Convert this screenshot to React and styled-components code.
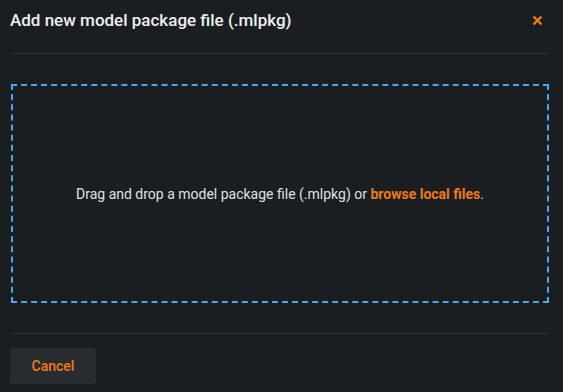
import React from "react";
import styled, { createGlobalStyle } from "styled-components";

const GlobalStyle = createGlobalStyle`
  html, body {
    margin: 0;
    padding: 0;
    background: #1a1e21;
  }
  body {
    font-family: Roboto, "Liberation Sans", sans-serif;
  }
`;

const Dialog = styled.div`
  width: 563px;
  height: 392px;
  box-sizing: border-box;
  background: #1a1e21;
  padding: 0 14px 0 10px;
  display: flex;
  flex-direction: column;
`;

const Header = styled.div`
  height: 40px;
  display: flex;
  align-items: center;
  justify-content: space-between;
  margin-bottom: 13px;
`;

const Title = styled.h2`
  margin: 0;
  font-size: 17px;
  font-weight: 500;
  color: #eef0f2;
`;

const CloseButton = styled.button`
  border: 0;
  background: none;
  padding: 0;
  width: 14px;
  height: 14px;
  margin-right: 5px;
  display: flex;
  align-items: center;
  justify-content: center;
  cursor: pointer;
`;

const Divider = styled.div`
  height: 1px;
  background: #2b2f33;
`;

const Body = styled.div`
  padding: 30px 0 30px 1px;
`;

const DropZone = styled.div`
  height: 219px;
  box-sizing: border-box;
  border: 2px dashed #4ea6ea;
  display: flex;
  align-items: center;
  justify-content: center;
  font-size: 14px;
  color: #dfe2e5;
`;

const Link = styled.a`
  color: #f07a12;
  font-weight: 700;
  text-decoration: none;
  cursor: pointer;
`;

const Footer = styled.div`
  padding-top: 14px;
`;

const Button = styled.button`
  width: 86px;
  height: 36px;
  border: 0;
  border-radius: 2px;
  background: #282c30;
  color: #f07a12;
  font-family: Roboto, "Liberation Sans", sans-serif;
  font-size: 14px;
  font-weight: 500;
  cursor: pointer;
`;

const App = () => {
  return (
    <>
      <GlobalStyle />
      <Dialog>
        <Header>
          <Title>Add new model package file (.mlpkg)</Title>
          <CloseButton aria-label="Close">
            <svg width="11" height="11" viewBox="0 0 11 11">
              <path
                d="M1.5 1.5 L9.5 9.5 M9.5 1.5 L1.5 9.5"
                stroke="#f07a12"
                strokeWidth="2.4"
                strokeLinecap="butt"
              />
            </svg>
          </CloseButton>
        </Header>
        <Divider />
        <Body>
          <DropZone>
            <span>
              Drag and drop a model package file (.mlpkg) or{" "}
              <Link>browse local files</Link>.
            </span>
          </DropZone>
        </Body>
        <Divider />
        <Footer>
          <Button>Cancel</Button>
        </Footer>
      </Dialog>
    </>
  );
};

export default App;
